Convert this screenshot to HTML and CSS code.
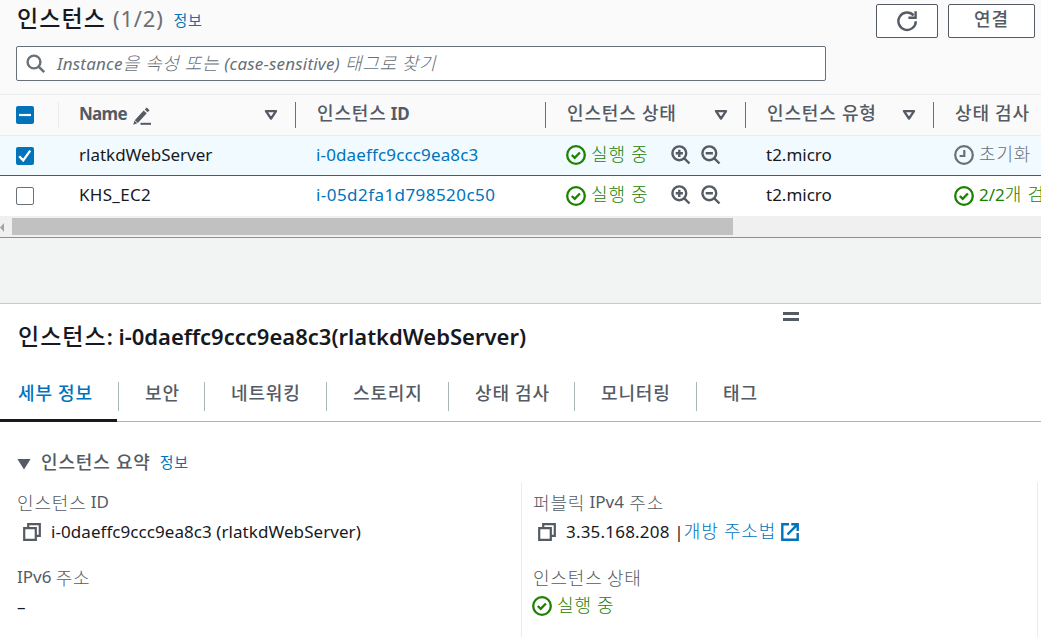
FILE: index.html
```html
<!DOCTYPE html>
<html lang="ko">
<head>
<meta charset="utf-8">
<title>인스턴스</title>
<link rel="stylesheet" href="styles.css">
</head>
<body>
<svg class="defs" width="0" height="0" aria-hidden="true">
  <symbol id="ok" viewBox="0 0 20 20"><circle cx="10" cy="10" r="8.8" fill="none" stroke="currentColor" stroke-width="2.3"/><path d="M5.8 10l2.9 2.9 5.2-5.4" fill="none" stroke="currentColor" stroke-width="2.3"/></symbol>
  <symbol id="clock" viewBox="0 0 20 20"><circle cx="10" cy="10" r="8.8" fill="none" stroke="currentColor" stroke-width="2.2"/><path d="M10.3 5v6H5.6" fill="none" stroke="currentColor" stroke-width="2.2"/></symbol>
  <symbol id="zin" viewBox="0 0 20 20"><circle cx="8.3" cy="8.3" r="6.9" fill="none" stroke="currentColor" stroke-width="2.4"/><path d="M13.3 13.3l5.2 5.2M4.7 8.3h7.2M8.3 4.7v7.2" fill="none" stroke="currentColor" stroke-width="2.4"/></symbol>
  <symbol id="zout" viewBox="0 0 20 20"><circle cx="8.3" cy="8.3" r="6.9" fill="none" stroke="currentColor" stroke-width="2.4"/><path d="M13.3 13.3l5.2 5.2M4.7 8.3h7.2" fill="none" stroke="currentColor" stroke-width="2.4"/></symbol>
  <symbol id="sort" viewBox="0 0 14 12"><path d="M2 2.1h10L7 9.6z" fill="none" stroke="currentColor" stroke-width="2.4" stroke-linejoin="round"/></symbol>
  <symbol id="copy" viewBox="0 0 18 18"><path d="M1.2 5.2h11.6v11.6H1.2zM5.2 5V1.2h11.6v11.6H13" fill="none" stroke="currentColor" stroke-width="2.2"/></symbol>
</svg>

<header class="list-header">
  <h1 class="list-title"><span class="ko">인스턴스</span><span class="count">(1/2)</span></h1>
  <a class="info ko">정보</a>
  <div class="actions">
    <button class="btn btn-refresh" aria-label="refresh"><svg width="22" height="22" viewBox="0 0 22 22"><path d="M19.8 11.2A8.7 8.7 0 1 1 17.6 5.4" fill="none" stroke="currentColor" stroke-width="2.4"/><path d="M19.6 1.2v6.6h-7.2" fill="none" stroke="currentColor" stroke-width="2.4"/></svg></button>
    <button class="btn btn-connect ko">연결</button>
  </div>
</header>

<div class="search">
  <svg width="20" height="20" viewBox="0 0 20 20"><circle cx="8" cy="8" r="6.4" fill="none" stroke="currentColor" stroke-width="2.4"/><path d="M12.6 12.6l5.6 5.6" stroke="currentColor" stroke-width="2.6"/></svg>
  <span class="placeholder">Instance<span class="ko">을 속성 또는 </span>(case-sensitive)<span class="ko"> 태그로 찾기</span></span>
</div>

<section class="table">
  <div class="row head">
    <div class="cell check"><span class="box on"><svg width="18" height="18" viewBox="0 0 18 18"><path d="M3 9h12" stroke="#fff" stroke-width="2.2"/></svg></span></div>
    <div class="cell"><span class="name">Name</span><svg class="pencil" width="18" height="18" viewBox="0 0 18 18"><path d="M3.3 14.6l8.9-9.7" stroke="currentColor" stroke-width="4.2"/><path d="M13.2 3.8l1.9-2" stroke="currentColor" stroke-width="4"/><path d="M.3 17.7l1-4 3 2.6z" fill="currentColor"/><path d="M7.5 16.8H18" stroke="currentColor" stroke-width="2"/></svg><svg class="sort" width="14" height="12"><use href="#sort"/></svg></div>
    <div class="cell"><span class="ko">인스턴스</span><span class="latin-gap">ID</span></div>
    <div class="cell"><span class="ko">인스턴스 상태</span><svg class="sort" width="14" height="12"><use href="#sort"/></svg></div>
    <div class="cell"><span class="ko">인스턴스 유형</span><svg class="sort" width="14" height="12"><use href="#sort"/></svg></div>
    <div class="cell"><span class="ko">상태 검사</span></div>
  </div>
  <div class="row selected">
    <div class="cell check"><span class="box on"><svg width="18" height="18" viewBox="0 0 18 18"><path d="M3.2 9.2l4 4.2 7-9.8" fill="none" stroke="#fff" stroke-width="2.3"/></svg></span></div>
    <div class="cell">rlatkdWebServer</div>
    <div class="cell link">i-0daeffc9ccc9ea8c3</div>
    <div class="cell state"><svg class="status" width="20" height="20"><use href="#ok"/></svg><span class="ko">실행 중</span><svg class="mag" width="20" height="20"><use href="#zin"/></svg><svg class="mag" width="20" height="20"><use href="#zout"/></svg></div>
    <div class="cell">t2.micro</div>
    <div class="cell state pending"><svg class="status clock" width="20" height="20"><use href="#clock"/></svg><span class="ko">초기화</span></div>
  </div>
  <div class="row last">
    <div class="cell check"><span class="box"></span></div>
    <div class="cell">KHS_EC2</div>
    <div class="cell link">i-05d2fa1d798520c50</div>
    <div class="cell state"><svg class="status" width="20" height="20"><use href="#ok"/></svg><span class="ko">실행 중</span><svg class="mag" width="20" height="20"><use href="#zin"/></svg><svg class="mag" width="20" height="20"><use href="#zout"/></svg></div>
    <div class="cell">t2.micro</div>
    <div class="cell state"><svg class="status" width="20" height="20"><use href="#ok"/></svg><span>2/2</span><span class="ko">개 검</span></div>
  </div>
  <div class="scrollbar"><svg width="12" height="20" viewBox="0 0 12 20"><path d="M4 6v9L0 10.5z" fill="#a3a3a3"/></svg><span class="thumb"></span></div>
</section>

<div class="gap"></div>

<section class="panel">
  <div class="handle"></div>
  <h2 class="panel-title"><span class="ko">인스턴스</span><span>: </span><span>i-0daeffc9ccc9ea8c3(rlatkdWebServer)</span></h2>
  <nav class="tabs ko">
    <a class="tab active">세부 정보</a><a class="tab t2">보안</a><a class="tab t3">네트워킹</a><a class="tab t4">스토리지</a><a class="tab t5">상태 검사</a><a class="tab t6">모니터링</a><a class="tab t7">태그</a>
  </nav>
  <div class="summary"><svg width="14" height="12" viewBox="0 0 14 12"><path d="M.4 1h13.2L7 11.4z" fill="currentColor"/></svg><span class="ko">인스턴스 요약</span><a class="info ko">정보</a></div>
  <div class="details">
    <div class="col">
      <div class="label"><span class="ko">인스턴스</span><span class="latin-gap">ID</span></div>
      <div class="value copyable"><svg width="18" height="18"><use href="#copy"/></svg><span>i-0daeffc9ccc9ea8c3 (rlatkdWebServer)</span></div>
      <div class="label second">IPv6<span class="ko"> 주소</span></div>
      <div class="value">–</div>
    </div>
    <div class="col">
      <div class="label"><span class="ko">퍼블릭 </span>IPv4<span class="ko"> 주소</span></div>
      <div class="value copyable"><svg width="18" height="18"><use href="#copy"/></svg><span class="ip">3.35.168.208 |</span><a class="link ko">개방 주소법</a><svg class="ext" width="18" height="18" viewBox="0 0 18 18"><path d="M8 1.3H1.3v15.4h15.4V10M10.3 1.3h6.4v6.6M16.3 1.7L6.5 11.5" fill="none" stroke="currentColor" stroke-width="2.4"/></svg></div>
      <div class="label second"><span class="ko">인스턴스 상태</span></div>
      <div class="value state"><svg class="status" width="20" height="20"><use href="#ok"/></svg><span class="ko">실행 중</span></div>
    </div>
  </div>
</section>
</body>
</html>
```
FILE: styles.css
```css
* { box-sizing: border-box; }
html, body { margin: 0; height: 637px; overflow: hidden; }
body {
  font: 17px/24px "Noto Sans", "Noto Sans CJK KR", sans-serif;
  color: #16191f;
  background: #fafafa;
  white-space: nowrap;
}
svg { flex: none; display: block; }
.defs { position: absolute; }
.ko {
  font-family: "Noto Sans CJK KR", "Noto Sans", sans-serif;
  font-size: 18px;
  font-weight: 300;
  letter-spacing: .85px;
  word-spacing: -.6px;
}
span.ko { white-space: pre; }
.link, .info { color: #0073bb; }

.list-header { display: flex; height: 46px; padding-left: 17px; }
.list-title { display: flex; margin: 5px 0 0; font-size: 22px; line-height: 28px; font-weight: 400; }
.list-title .ko { font-size: 23px; font-weight: 500; letter-spacing: 1.1px; margin-top: -2px; }
.count { margin-left: 7px; margin-top: -1px; color: #687078; letter-spacing: .8px; }
.info.ko { font-size: 15px; font-weight: 400; letter-spacing: .6px; }
.list-header .info { margin: 8px 0 0 10px; }
.actions { display: flex; gap: 10px; margin: 4px 6px 0 auto; }
.btn {
  display: flex; align-items: center; justify-content: center;
  height: 34px; padding: 0; color: #545b64;
  background: #fff; border: 1px solid #545b64; border-radius: 2px;
}
.btn-refresh { width: 62px; }
.btn-connect { width: 87px; padding-bottom: 7px; }
.btn-connect.ko { font-weight: 500; }

.search {
  display: flex; align-items: center;
  width: 810px; height: 35px; margin-left: 16px; padding-left: 9px;
  color: #687078; background: #fff; border: 1px solid #687078; border-radius: 2px;
}
.placeholder { margin-left: 11px; padding-bottom: 2px; font-style: italic; letter-spacing: .2px; }
.placeholder .ko { letter-spacing: .7px; }

.table { margin-top: 13px; border-top: 1px solid #eaeded; }
.row {
  display: grid; grid-template-columns: 59px 237px 250px 200px 188px 107px;
  height: 40px; background: #fff; align-items: center;
}
.row.head { height: 41px; background: #fafafa; border-bottom: 1px solid #eaeded; color: #545b64; font-weight: 700; }
.row.selected { background: #f1faff; border-bottom: 1px solid #0073bb; }
.cell { display: flex; align-items: center; height: 26px; padding: 0 0 2px 20px; overflow: hidden; }
.cell .ko { padding-bottom: 4px; }
.head .cell { border-right: 1px solid #687078; padding-left: 21px; }
.head .cell:nth-child(2) { padding-left: 20px; }
.head .cell:last-child { border: 0; }
.head .check.check { border-color: #eaeded; }
.check.check { padding: 0 0 0 16px; }
.head .ko { font-weight: 500; }
.name { letter-spacing: -.7px; }
.selected .link { letter-spacing: .14px; }
.last .link { letter-spacing: .44px; }
.last .cell:nth-child(2) { letter-spacing: .3px; }
.latin-gap { margin-left: 4px; }
.sort { margin: 1px 17px 0 auto; }
.pencil { margin: 3px 0 0 6px; }
.box { width: 18px; height: 18px; border: 1px solid #687078; border-radius: 2px; background: #fff; }
.box.on { border: 0; background: #0073bb; }
.state { color: #1d8102; }
.state.pending { color: #687078; }
.status { margin: 1px 5px 0 0; }
.mag { margin-left: 10px; color: #545b64; }
.ko + .mag { margin-left: 22px; }
.scrollbar { display: flex; align-items: center; height: 21px; background: #f0f0f0; }
.thumb { width: 721px; height: 17px; background: #c1c1c1; }

.gap { height: 67px; background: #f2f4f4; border-top: 1px solid #879196; border-bottom: 1px solid #c5caca; }

.panel { height: 333px; background: #fff; }
.handle { width: 16px; height: 9px; margin-left: 783px; border: solid #545b64; border-width: 3px 0; transform: translateY(8px); }
.panel-title { display: flex; margin: 7px 0 1px 18px; font-size: 22px; line-height: 32px; font-weight: 600; letter-spacing: 0; white-space: pre; }
.panel-title .ko { font-size: 23px; font-weight: 500; letter-spacing: 1px; margin-top: -1px; }
.tabs { display: flex; height: 69px; padding-top: 29px; border-bottom: 1px solid #aab7b8; color: #545b64; }
.tabs.ko { font-weight: 500; }
.tab { height: 29px; padding-left: 26px; line-height: 21px; border-right: 1px solid #aab7b8; }
.tab.active { position: relative; width: 119px; padding-left: 18px; color: #0073bb; }
.tab.active::after { content: ""; position: absolute; left: 0; bottom: -11px; width: 117px; height: 3px; background: #16191f; }
.t2 { width: 86px; }
.t3 { width: 122px; }
.t4 { width: 122px; }
.t5 { width: 126px; }
.t6 { width: 122px; }
.t7 { border: 0; }
.summary { display: flex; align-items: center; height: 60px; padding: 21px 0 0 17px; color: #545b64; }
.summary svg { margin-top: 2px; }
.summary .ko { font-weight: 500; margin-left: 10px; padding-bottom: 4px; }
.summary .info.ko { font-weight: 400; margin-left: 9px; padding-bottom: 2px; }
.details { display: grid; grid-template-columns: 521px 517px; height: 155px; }
.col { padding: 8px 0 0 17px; }
.col + .col { padding-left: 11px; border: solid #eaeded; border-width: 0 1px; }
.label { display: flex; height: 27px; color: #545b64; }
.label > .ko:first-child { word-spacing: -1.6px; }
.label.second { margin-top: 19px; }
.value { display: flex; align-items: center; height: 29px; }
.value .ko { padding-bottom: 3px; }
.copyable { letter-spacing: .06px; }
.copyable svg:first-child { margin: 0 10px 0 6px; color: #545b64; }
.ip { letter-spacing: .2px; }
.col + .col .copyable svg:first-child { margin-left: 5px; }
.col + .col .value.state { margin: -1px 0 0 -1px; }
.ext { margin-left: 5px; color: #0073bb; }
```
